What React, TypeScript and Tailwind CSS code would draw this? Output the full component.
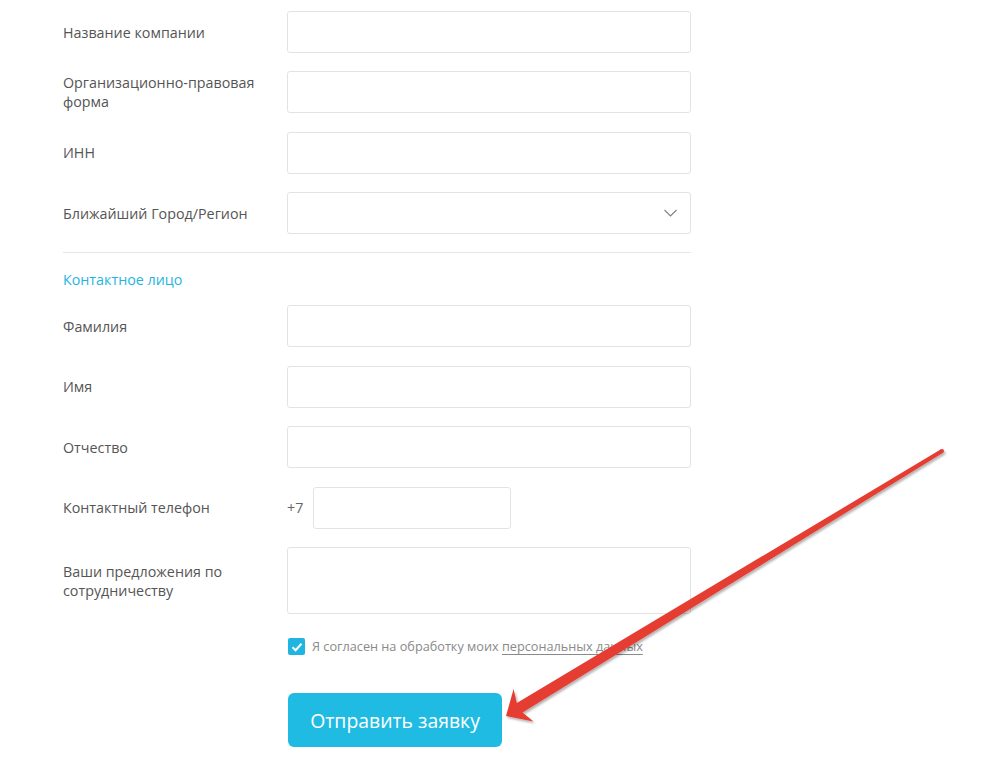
const font = { fontFamily: '"Open Sans", "Liberation Sans", sans-serif' };

function Row({ label, children }: { label: string; children: React.ReactNode }) {
  return (
    <div className="flex items-center">
      <div className="w-[224px] shrink-0 pr-6 text-[14.3px] leading-[19px] text-[#555]">{label}</div>
      {children}
    </div>
  );
}

function Field() {
  return <div className="h-[42px] w-[404px] rounded-[3px] border border-[#e3e3e3] bg-white" />;
}

function Arrow() {
  return (
    <svg className="pointer-events-none absolute inset-0" width="1000" height="761" viewBox="0 0 1000 761">
      <defs>
        <filter id="sh" x="-10%" y="-10%" width="120%" height="120%">
          <feDropShadow dx="1.5" dy="2" stdDeviation="1" floodColor="#000" floodOpacity="0.3" />
        </filter>
      </defs>
      <g filter="url(#sh)" fill="#e53d31">
        <polygon points="506,716 533.4,721.5 522.6,712.4 943,452.7 941,449.3 516.8,703 513.6,689.1" />
        <circle cx="942" cy="451" r="2" />
      </g>
    </svg>
  );
}

export default function App() {
  return (
    <div className="relative h-[761px] w-[1000px] overflow-hidden bg-white" style={font}>
      <div className="ml-[63px] w-[628px] pt-[11px]">
        <div className="flex flex-col gap-[18.4px]">
          <Row label="Название компании"><Field /></Row>
          <Row label="Организационно-правовая форма"><Field /></Row>
          <Row label="ИНН"><Field /></Row>
          <Row label="Ближайший Город/Регион">
            <div className="flex h-[42px] w-[404px] items-center justify-end rounded-[3px] border border-[#e3e3e3] bg-white pr-[13px]">
              <svg width="13" height="8" viewBox="0 0 13 8">
                <path d="M0.5 1 L6.5 7 L12.5 1" fill="none" stroke="#808080" strokeWidth="1.1" />
              </svg>
            </div>
          </Row>
        </div>

        <div className="mt-[18px] h-px w-[628px] bg-[#e6e6e6]" />

        <div className="mt-[17px] text-[14.3px] leading-[20px] text-[#1fb5e0]">Контактное лицо</div>

        <div className="mt-[15px] flex flex-col gap-[18.5px]">
          <Row label="Фамилия"><Field /></Row>
          <Row label="Имя"><Field /></Row>
          <Row label="Отчество"><Field /></Row>
          <Row label="Контактный телефон">
            <div className="flex items-center">
              <span className="w-[26px] text-[14.3px] text-[#666]">+7</span>
              <div className="h-[42px] w-[198px] rounded-[3px] border border-[#e3e3e3] bg-white" />
            </div>
          </Row>
          <Row label="Ваши предложения по сотрудничеству">
            <div className="h-[67px] w-[404px] rounded-[3px] border border-[#e3e3e3] bg-white" />
          </Row>
        </div>

        <div className="ml-[225px] mt-[23px] flex items-center">
          <div className="flex h-[17px] w-[17px] items-center justify-center rounded-[2px] bg-[#1fb5e0]">
            <svg width="12" height="10" viewBox="0 0 12 10">
              <path d="M1.5 5.2 L4.6 8.2 L10.5 1.8" fill="none" stroke="#fff" strokeWidth="2" />
            </svg>
          </div>
          <span className="ml-[7px] text-[12.7px] text-[#8a8a8a]">
            Я согласен на обработку моих{" "}
            <span className="underline decoration-[#8a8a8a] underline-offset-[3px]">персональных данных</span>
          </span>
        </div>

        <button className="ml-[225px] mt-[37px] h-[54px] w-[214px] rounded-[6px] bg-[#1fbbe3] text-[19.4px] text-white">
          Отправить заявку
        </button>
      </div>
      <Arrow />
    </div>
  );
}
